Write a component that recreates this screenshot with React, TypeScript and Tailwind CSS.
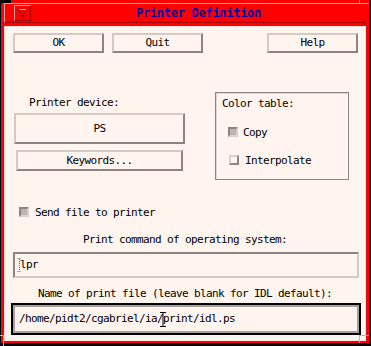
import React from "react";

const raised =
  "border-2 border-t-[#d2cac5] border-l-[#d2cac5] border-b-[#8c8480] border-r-[#8c8480] bg-[#fff5ee] flex items-center justify-center";

const Check = ({ on }: { on: boolean }) => (
  <span
    className={
      on
        ? "block shrink-0 w-[10px] h-[10px] border-2 border-t-[#8c8480] border-l-[#8c8480] border-b-[#d8d0cc] border-r-[#d8d0cc] bg-[#bdb5b0]"
        : "block shrink-0 w-[10px] h-[10px] border-2 border-t-[#d8d0cc] border-l-[#d8d0cc] border-b-[#8c8480] border-r-[#8c8480] bg-[#fff5ee]"
    }
  />
);

export default function App() {
  return (
    <div className="relative w-[371px] h-[346px] bg-black pl-[1px] pr-[2px] pb-[3px] font-['DejaVu_Sans_Mono',monospace] text-[11px] leading-[12px] tracking-[-0.62px] text-black">
      <div className="h-full bg-[#ff0000] flex flex-col">
        {/* title bar */}
        <div className="mt-[3px] mx-[3px] h-[20px] border-t border-l border-t-[#ff9a9a] border-l-[#ff9a9a] border-b border-b-[#a80000] flex items-center">
          <div className="ml-[9px] w-[17px] h-[16px] shrink-0 border border-t-[#ff9a9a] border-l-[#ff9a9a] border-b-[#a80000] border-r-[#a80000] flex items-center justify-center">
            <svg className="shrink-0" width="9" height="8" viewBox="0 0 9 8" shapeRendering="crispEdges">
              <path d="M0.5 0.5H8.5" stroke="#ffb0b0" strokeWidth="1" />
              <path d="M0.5 0.5L4.5 7.5L8.5 0.5" stroke="#8a0000" strokeWidth="1" fill="none" />
            </svg>
          </div>
          <div className="flex-1 text-center font-['DejaVu_Sans_Mono',monospace] font-bold text-[12px] tracking-[-0.28px] text-[#0000a8]">
            Printer Definition
          </div>
        </div>

        {/* content */}
        <div className="mt-[3px] mx-[3px] mb-[2px] flex-1 border border-[#ffe4e4] bg-[#fff5ee] flex flex-col">
          <div className="mt-[6px] flex pl-[8px] pr-[7px]">
            <button className={`${raised} w-[91px] h-[20px]`}>OK</button>
            <button className={`${raised} w-[91px] h-[20px] ml-[8px]`}>Quit</button>
            <button className={`${raised} w-[91px] h-[20px] ml-auto`}>Help</button>
          </div>

          <div className="mt-[39px] flex h-[87px]">
            <div className="w-[180px] pl-[9px] flex flex-col">
              <div className="ml-[15px] mt-[5px]">Printer device:</div>
              <button className={`${raised} mt-[4px] w-[171px] h-[31px]`}>PS</button>
              <button className={`${raised} mt-[6px] ml-[2px] w-[167px] h-[21px]`}>Keywords...</button>
            </div>
            <div className="ml-[30px] w-[134px] h-[88px] border border-[#8c8480] shadow-[inset_1px_1px_0_#e0d8d4] pl-[6px] pt-[5px] flex flex-col">
              <div>Color table:</div>
              <div className="mt-[16px] ml-[6px] h-[12px] flex items-center gap-[5px]">
                <Check on />
                <span className="mt-[1px]">Copy</span>
              </div>
              <div className="mt-[16px] ml-[7px] h-[12px] flex items-center gap-[6px]">
                <Check on={false} />
                <span className="mt-[1px]">Interpolate</span>
              </div>
            </div>
          </div>

          <div className="mt-[27px] ml-[14px] h-[12px] flex items-center gap-[6px]">
            <Check on />
            <span className="mt-[1px]">Send file to printer</span>
          </div>

          <div className="mt-[16px] text-center">Print command of operating system:</div>

          <div className="relative mt-[6px] ml-[8px] w-[346px] h-[26px] border-2 border-t-[#8c8480] border-l-[#8c8480] border-b-[#d2cac5] border-r-[#d2cac5] flex items-center pl-[5px]">
            <svg className="absolute left-[2px] top-[4px]" width="5" height="14" viewBox="0 0 5 14">
              <path d="M0.5 0.5h4M2.5 1v12M0.5 13.5h4" stroke="#6c6460" strokeWidth="1" strokeDasharray="1 1" fill="none" />
            </svg>
            <span>lpr</span>
          </div>

          <div className="mt-[10px] text-center">Name of print file (leave blank for IDL default):</div>

          <div className="mt-[3px] ml-[6px] w-[350px] h-[32px] border-2 border-black">
            <div className="h-full border-2 border-[#a8a09c] flex items-center pl-[4px]">
              <span>/home/pidt2/cgabriel/ia/</span>
              <span className="relative w-0 h-[15px]">
                <svg className="absolute left-[-3px] top-0" width="6" height="15" viewBox="0 0 6 15">
                  <path d="M0 0.5h6M3 1v13M0 14.5h6" stroke="#000" strokeWidth="1" fill="none" />
                </svg>
              </span>
              <span>print/idl.ps</span>
            </div>
          </div>
        </div>
      </div>
      {/* frame corner notches */}
      <div className="absolute left-0 top-0 w-[11px] h-[3px] bg-black" />
      <div className="absolute left-[359px] top-0 w-[10px] h-[4px] border-l border-b border-[#ff9a9a]" />
      <div className="absolute left-0 top-[335px] w-[4px] h-[11px] border-t border-r border-[#ff9a9a]" />
      <div className="absolute left-[359px] top-[335px] w-[10px] h-[8px] border-t border-l border-[#ff9a9a]" />
    </div>
  );
}
